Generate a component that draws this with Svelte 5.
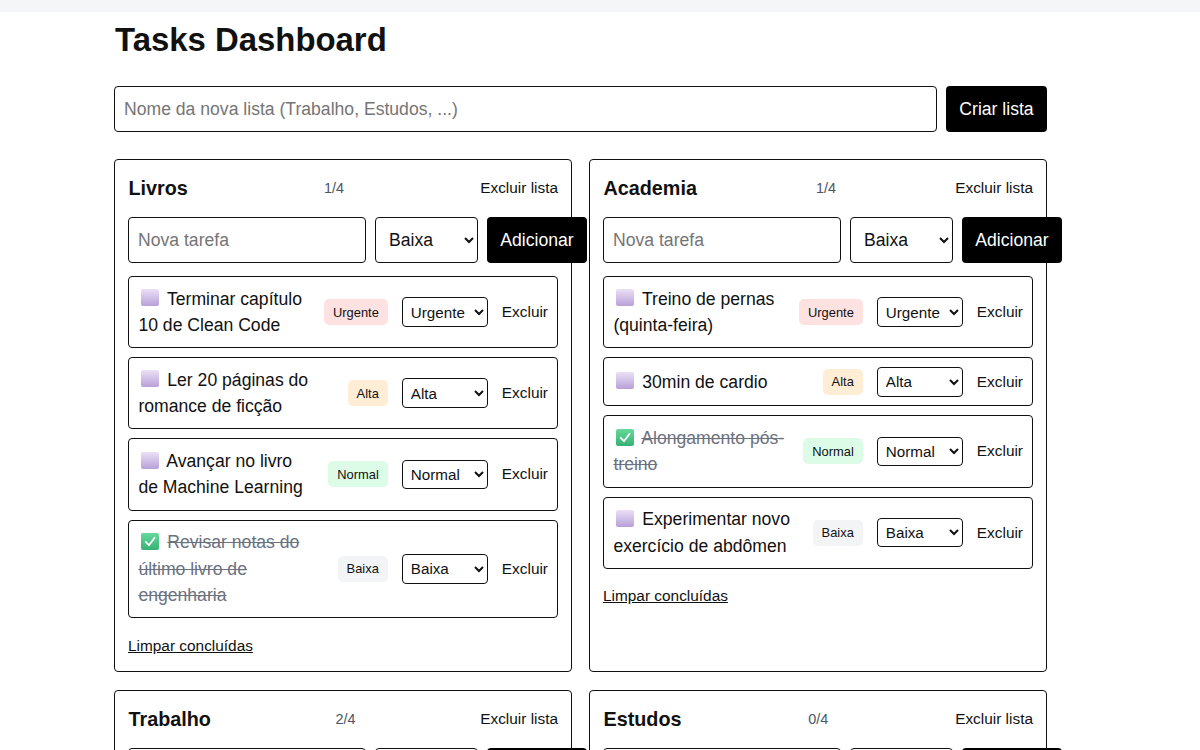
<script lang="ts">
	type Priority = 'Urgente' | 'Alta' | 'Normal' | 'Baixa';
	type Task = { id: number; text: string; done: boolean; priority: Priority };
	type List = { id: number; name: string; total?: number; doneCount?: number; draft: string; draftPriority: Priority; tasks: Task[] };

	const priorities: Priority[] = ['Urgente', 'Alta', 'Normal', 'Baixa'];

	let nextId = 100;
	let newListName = $state('');

	let lists = $state<List[]>([
		{
			id: 1,
			name: 'Livros',
			draft: '',
			draftPriority: 'Baixa',
			tasks: [
				{ id: 11, text: 'Terminar capítulo 10 de Clean Code', done: false, priority: 'Urgente' },
				{ id: 12, text: 'Ler 20 páginas do romance de ficção', done: false, priority: 'Alta' },
				{ id: 13, text: 'Avançar no livro de Machine Learning', done: false, priority: 'Normal' },
				{ id: 14, text: 'Revisar notas do último livro de engenharia', done: true, priority: 'Baixa' }
			]
		},
		{
			id: 2,
			name: 'Academia',
			draft: '',
			draftPriority: 'Baixa',
			tasks: [
				{ id: 21, text: 'Treino de pernas (quinta-feira)', done: false, priority: 'Urgente' },
				{ id: 22, text: '30min de cardio', done: false, priority: 'Alta' },
				{ id: 23, text: 'Alongamento pós-treino', done: true, priority: 'Normal' },
				{ id: 24, text: 'Experimentar novo exercício de abdômen', done: false, priority: 'Baixa' }
			]
		},
		{ id: 3, name: 'Trabalho', total: 4, doneCount: 2, draft: '', draftPriority: 'Baixa', tasks: [] },
		{ id: 4, name: 'Estudos', total: 4, doneCount: 0, draft: '', draftPriority: 'Baixa', tasks: [] }
	]);

	function createList() {
		const name = newListName.trim();
		if (!name) return;
		lists.push({ id: nextId++, name, draft: '', draftPriority: 'Baixa', tasks: [] });
		newListName = '';
	}

	function addTask(list: List) {
		const text = list.draft.trim();
		if (!text) return;
		list.tasks.push({ id: nextId++, text, done: false, priority: list.draftPriority });
		list.draft = '';
	}

	function removeList(list: List) {
		lists = lists.filter((l) => l.id !== list.id);
	}

	function removeTask(list: List, task: Task) {
		list.tasks = list.tasks.filter((t) => t.id !== task.id);
	}

	function clearDone(list: List) {
		list.tasks = list.tasks.filter((t) => !t.done);
	}

	function progress(list: List) {
		if (list.total !== undefined) return `${list.doneCount}/${list.total}`;
		return `${list.tasks.filter((t) => t.done).length}/${list.tasks.length}`;
	}
</script>

<div class="topbar"></div>
<main>
	<h1>Tasks Dashboard</h1>

	<form class="new-list" onsubmit={(e) => { e.preventDefault(); createList(); }}>
		<input placeholder="Nome da nova lista (Trabalho, Estudos, ...)" bind:value={newListName} />
		<button type="submit" class="primary">Criar lista</button>
	</form>

	<div class="grid">
		{#each lists as list (list.id)}
			<section class="card">
				<header>
					<h2>{list.name}</h2>
					<span class="count">{progress(list)}</span>
					<button type="button" class="link" onclick={() => removeList(list)}>Excluir lista</button>
				</header>

				<form class="new-task" onsubmit={(e) => { e.preventDefault(); addTask(list); }}>
					<input placeholder="Nova tarefa" bind:value={list.draft} />
					<select bind:value={list.draftPriority}>
						{#each priorities as p}<option value={p}>{p}</option>{/each}
					</select>
					<button type="submit" class="primary">Adicionar</button>
				</form>

				{#if list.tasks.length}
					<ul>
						{#each list.tasks as task (task.id)}
							<li>
								<div class="text">
									<button type="button" class="toggle" aria-label="Alternar" onclick={() => (task.done = !task.done)}>
										{#if task.done}
											<svg viewBox="0 0 18 17" width="18" height="17">
												<defs>
													<linearGradient id="g-done" x1="0" y1="0" x2="0" y2="1">
														<stop offset="0" stop-color="#66d89c" />
														<stop offset="1" stop-color="#37b274" />
													</linearGradient>
												</defs>
												<rect width="18" height="17" rx="2" fill="url(#g-done)" />
												<path d="M4.3 8.3l3.7 3.9 6-8" fill="none" stroke="#fff" stroke-width="1.8" />
											</svg>
										{:else}
											<svg viewBox="0 0 18 17" width="18" height="17">
												<defs>
													<linearGradient id="g-open" x1="0" y1="0" x2="0" y2="1">
														<stop offset="0" stop-color="#ebe0f6" />
														<stop offset="1" stop-color="#b8a0d8" />
													</linearGradient>
												</defs>
												<rect width="18" height="17" rx="2" fill="url(#g-open)" />
											</svg>
										{/if}
									</button>
									<span class:done={task.done}>{task.text}</span>
								</div>
								<span class="badge {task.priority.toLowerCase()}">{task.priority}</span>
								<select class="small" bind:value={task.priority}>
									{#each priorities as p}<option value={p}>{p}</option>{/each}
								</select>
								<button type="button" class="link" onclick={() => removeTask(list, task)}>Excluir</button>
							</li>
						{/each}
					</ul>
					<button type="button" class="clear" onclick={() => clearDone(list)}>Limpar concluídas</button>
				{/if}
			</section>
		{/each}
	</div>
</main>

<style>
	:global(html),
	:global(body) {
		height: 750px;
		overflow: hidden;
	}
	:global(body) {
		background: #fff;
		color: #111;
		font-family: 'Liberation Sans', Arial, sans-serif;
	}
	.topbar {
		height: 12px;
		background: #f5f6f8;
	}
	main {
		width: 933px;
		margin-left: 114px;
	}
	h1 {
		margin: 0 0 0 1px;
		font-size: 32.9px;
		line-height: 56px;
		font-weight: 700;
	}
	input,
	select,
	button {
		font-family: inherit;
		color: #111;
	}
	input,
	select {
		background: #fff;
		border: 1px solid #111;
		border-radius: 4px;
		font-size: 17.6px;
		box-sizing: border-box;
	}
	input {
		min-width: 0;
		flex: 1;
		padding: 0 9px;
	}
	.new-list {
		display: flex;
		gap: 9px;
		height: 46px;
		margin: 18px 0 27px;
	}
	.primary {
		background: #000;
		color: #fff;
		border: none;
		border-radius: 4px;
		font-size: 17.6px;
		padding: 0;
		flex: none;
		width: 100px;
		cursor: pointer;
	}
	.new-list .primary {
		width: 101px;
	}
	.grid {
		display: grid;
		grid-template-columns: 458px 458px;
		column-gap: 17px;
		row-gap: 18px;
	}
	.card {
		border: 1px solid #111;
		border-radius: 4px;
		padding: 14px 13px 16.4px;
		box-sizing: border-box;
		min-width: 0;
	}
	header {
		display: flex;
		justify-content: space-between;
		align-items: center;
		height: 28px;
		margin-bottom: 15px;
	}
	h2 {
		margin: 0;
		padding-left: 0.5px;
		font-size: 19.8px;
		font-weight: 700;
	}
	.count {
		font-size: 14.4px;
		color: #4b5563;
	}
	.link {
		background: none;
		border: none;
		padding: 0;
		font-size: 15.4px;
		cursor: pointer;
	}
	.new-task {
		display: flex;
		gap: 9px;
		height: 46px;
		width: 459px;
		margin-bottom: 13px;
	}
	.new-task input {
		flex: none;
		width: 238px;
	}
	.new-task select {
		flex: none;
		width: 103px;
		padding-left: 9px;
	}
	ul {
		list-style: none;
		margin: 0;
		padding: 0;
		display: flex;
		flex-direction: column;
		gap: 9px;
	}
	li {
		display: flex;
		align-items: center;
		gap: 14px;
		border: 1px solid #111;
		border-radius: 4px;
		padding: 8.8px 9px 8.8px 9.4px;
	}
	.text {
		flex: 1;
		min-width: 0;
		font-size: 17.6px;
		line-height: 26.3px;
	}
	.toggle {
		display: inline-block;
		width: 24px;
		height: 17px;
		padding: 0 0 0 2.6px;
		margin: 0;
		background: none;
		border: none;
		vertical-align: -1.5px;
		cursor: pointer;
	}
	.toggle svg {
		display: block;
	}
	.done {
		color: #6b7280;
		text-decoration: line-through;
	}
	.badge {
		flex: none;
		font-size: 12.9px;
		line-height: 19px;
		padding: 3.5px 9px;
		border-radius: 5px;
	}
	.urgente {
		background: #fee2e2;
	}
	.alta {
		background: #ffedd5;
	}
	.normal {
		background: #dcfce7;
	}
	.baixa {
		background: #f3f4f6;
	}
	select.small {
		flex: none;
		width: 86px;
		height: 29.6px;
		font-size: 15.2px;
		padding: 0 4px;
	}
	.clear {
		display: block;
		background: none;
		border: none;
		padding: 0;
		margin-top: 18.6px;
		font-size: 15.4px;
		line-height: 18px;
		text-decoration: underline;
		cursor: pointer;
	}
</style>
